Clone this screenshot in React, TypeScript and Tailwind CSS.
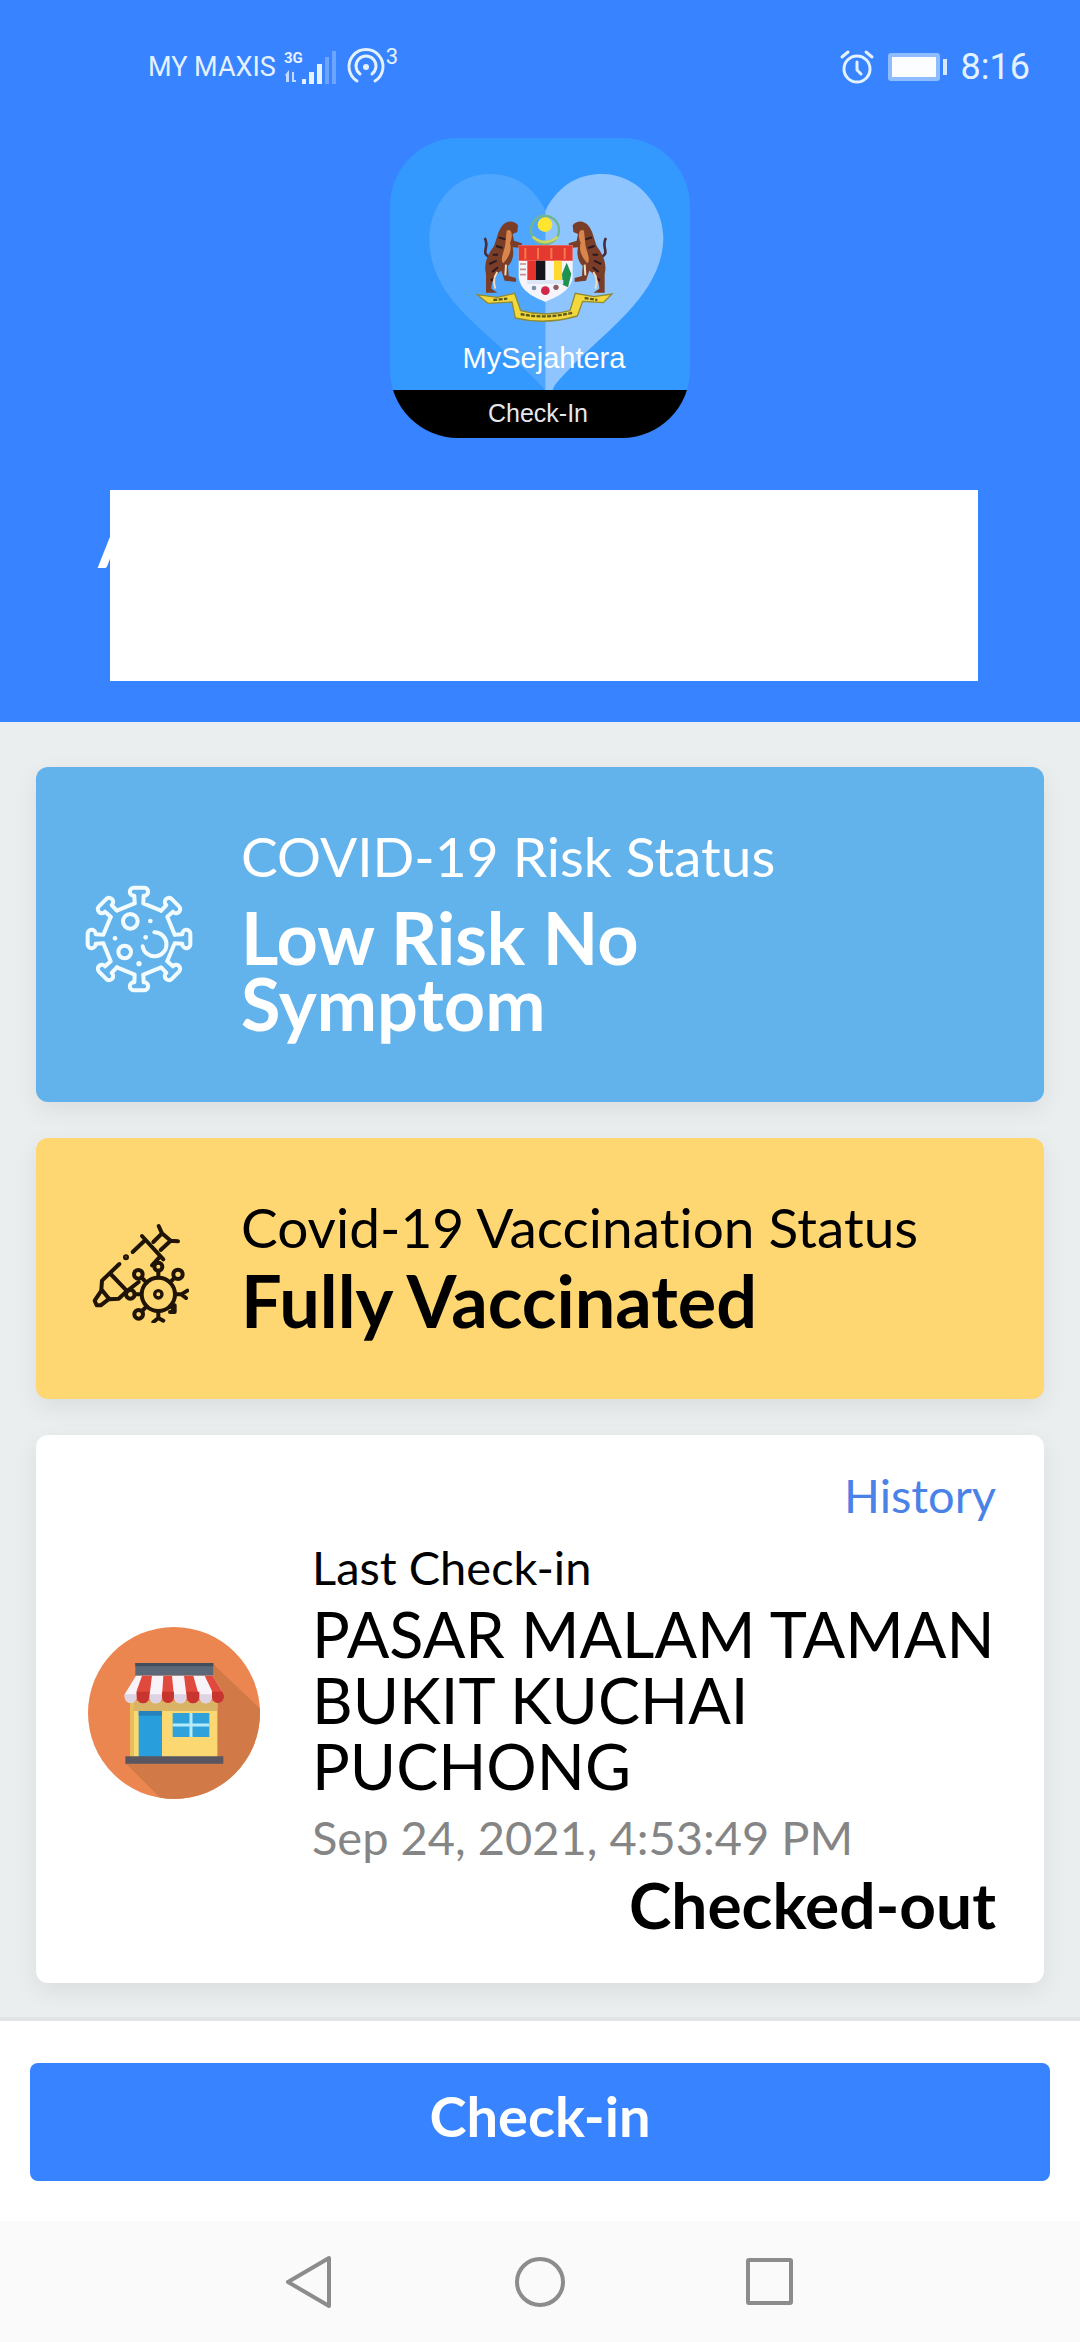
import type { ReactNode } from 'react'

interface StatusCardProps {
  icon: ReactNode
  label: string
  value: string
  className: string
  valueClassName: string
}

const SPIKE_ANGLES = [0, 45, 90, 135, 180, 225, 270, 315]

function SignalIcon() {
  return (
    <svg className="w-[54px] h-9" viewBox="0 0 54 36" fill="#e4f1ff" aria-hidden="true">
      <text x="0" y="14" fontFamily="Roboto, sans-serif" fontSize="15" fontWeight="700">3G</text>
      <path d="M1 26l4-5v12H2v-6zM8 33V23h2v8h2v2z" opacity=".8" />
      <rect x="18" y="30" width="4" height="5" />
      <rect x="25" y="23" width="5" height="12" />
      <rect x="33" y="15" width="5" height="20" />
      <rect x="41" y="8" width="4" height="27" opacity=".3" />
      <rect x="48" y="2" width="4" height="33" opacity=".3" />
    </svg>
  )
}

function HotspotIcon() {
  return (
    <svg className="w-10 h-10" viewBox="0 0 40 40" fill="none" stroke="#e4f1ff" strokeWidth="3" strokeLinecap="round" aria-hidden="true">
      <path d="M11 34a17 17 0 1 1 18 0" />
      <path d="M14 27a10 10 0 1 1 12 0" />
      <circle cx="20" cy="20" r="3" fill="#e4f1ff" stroke="none" />
    </svg>
  )
}

function AlarmIcon() {
  return (
    <svg className="w-9 h-9" viewBox="0 0 36 36" fill="none" stroke="#e4f1ff" strokeWidth="3" strokeLinecap="round" aria-hidden="true">
      <circle cx="18" cy="20" r="13" />
      <path d="M18 13v8l4 4M3 8l6-5M33 8l-6-5" />
    </svg>
  )
}

function BatteryIcon() {
  return (
    <svg className="w-[62px] h-[30px]" viewBox="0 0 62 30" aria-hidden="true">
      <rect x="1" y="1" width="52" height="28" rx="3" fill="#8fbcff" />
      <rect x="5" y="5" width="44" height="20" fill="#fbfdff" />
      <rect x="56" y="7" width="4" height="16" fill="#d8e9ff" />
    </svg>
  )
}

function StatusBar() {
  return (
    <div className="flex items-center justify-between h-[134px] pl-[148px] pr-[50px] text-[#e4f1ff] font-[Roboto,sans-serif]">
      <div className="flex items-center">
        <span className="text-[27px]">MY MAXIS</span>
        <span className="ml-2"><SignalIcon /></span>
        <span className="ml-2"><HotspotIcon /></span>
        <span className="text-[22px] leading-none pb-5">3</span>
      </div>
      <div className="flex items-center">
        <AlarmIcon />
        <span className="ml-3"><BatteryIcon /></span>
        <span className="ml-3 text-[36px]">8:16</span>
      </div>
    </div>
  )
}

function Tiger() {
  return (
    <g>
      <path d="M324 378C300 366 328 346 312 322" fill="none" stroke="#4a2c3c" strokeWidth="8" />
      <path d="M360 292C372 270 398 266 412 284L410 304L396 310L400 330L424 338L422 352L396 350C402 378 392 396 382 406L384 436L406 442V454L372 450L362 420C344 432 332 452 332 474L350 486H316V430C308 398 322 370 340 346C348 326 350 308 360 292Z" fill="#7a3d28" />
      <path d="M378 300C394 290 398 318 388 336C396 362 380 384 368 398C356 386 372 360 374 340Z" fill="#d9854c" />
      <path d="M334 424L352 410M326 400L348 390M336 372L352 372M346 346L366 352M354 320L374 326M330 450L344 440" stroke="#2c1820" strokeWidth="6" />
      <path d="M350 424C340 438 336 452 344 474M376 402L374 434" fill="none" stroke="#f3d9b6" strokeWidth="6" />
    </g>
  )
}

function AppLogo() {
  return (
    <div className="relative w-[300px] h-[300px] rounded-[68px] overflow-hidden bg-[#3399ff] text-white font-['Liberation_Sans',Arial,sans-serif]">
      <svg className="absolute inset-0 w-full h-full" viewBox="28 22 900 900" aria-hidden="true">
        <path d="M494 240C450 150 380 128 320 130C220 134 146 220 146 330C152 520 330 600 494 778Z" fill="#4fa6ff" />
        <path d="M494 240C540 150 610 128 670 130C770 134 846 220 848 320C848 480 690 590 580 700C545 738 520 760 516 778H494Z" fill="#8ec5ff" />
        <circle cx="493" cy="298" r="42" fill="none" stroke="#70b68e" strokeWidth="7" />
        <circle cx="493" cy="282" r="22" fill="#ffe52e" />
        <path d="M456 318Q493 350 532 318" fill="none" stroke="#cfd85c" strokeWidth="8" />
        <Tiger />
        <g transform="translate(988 0) scale(-1 1)"><Tiger /></g>
        <path d="M414 344H576V440C570 484 524 500 494 514C462 500 420 484 414 440Z" fill="#f4f4fa" />
        <path d="M414 344H576V390H414Z" fill="#e5392f" />
        <path d="M434 352v34M472 352v34M512 352v34M552 352v34" stroke="#f47a4c" strokeWidth="6" />
        <path d="M440 390h26v58h-26z" fill="#e6322c" />
        <path d="M466 390h28v58h-28z" fill="#15131c" />
        <path d="M520 390h24v58h-24z" fill="#ffd92e" />
        <path d="M544 430L558 396L572 430L562 470L546 462Z" fill="#1d9150" />
        <path d="M418 400h18M418 416h18M418 432h18" stroke="#c98b8b" strokeWidth="5" />
        <path d="M440 448H548V460H440Z" fill="#dce6f5" />
        <circle cx="494" cy="480" r="13" fill="#d22747" />
        <circle cx="460" cy="472" r="7" fill="#7d90a8" />
        <circle cx="526" cy="470" r="8" fill="#8a5b60" />
        <path d="M290 492L350 500L402 488L420 540Q494 560 568 540L584 488L640 498L694 490L668 516L606 512L590 556Q494 584 404 562L394 514L322 518Z" fill="#f3d83b" stroke="#8f8a34" strokeWidth="4" />
        <path d="M420 550Q494 566 576 546M338 508L380 504M612 502L650 508" fill="none" stroke="#5f5a20" strokeWidth="7" strokeDasharray="12 4" />
      </svg>
      <div className="relative flex flex-col h-full justify-end text-center">
        <div className="pl-2 pb-4 text-[29px] leading-8">MySejahtera</div>
        <div className="h-12 pr-1 leading-[46px] bg-black text-[25px] text-gray-200">Check-In</div>
      </div>
    </div>
  )
}

function VirusIcon() {
  return (
    <svg className="w-[110px] h-[110px]" viewBox="-165 -165 330 330" fill="none" stroke="#f2fcff" strokeWidth="12" strokeLinecap="round" strokeLinejoin="round" aria-hidden="true">
      {SPIKE_ANGLES.map((angle) => (
        <path key={angle} transform={`rotate(${angle})`} d="M-13-107L-14-130A12 12 0 0 1-17-154H17A12 12 0 0 1 14-130L13-107L66-85" />
      ))}
      <circle cx="-26" cy="-53" r="22" />
      <circle cx="-43" cy="39" r="19" />
      <path d="M46-20A36 36 0 1 1 11 22" />
      <g fill="#f2fcff" stroke="none">
        <circle cx="34" cy="-54" r="7" />
        <circle cx="-72" cy="-2" r="7" />
        <circle cx="20" cy="-5" r="7" />
        <circle cx="0" cy="74" r="8" />
      </g>
    </svg>
  )
}

function VaccineIcon() {
  return (
    <svg className="w-[100px] h-[100px]" viewBox="27 35 300 300" fill="none" stroke="#1f1405" strokeWidth="12" strokeLinecap="round" strokeLinejoin="round" aria-hidden="true">
      <path d="M236 44L246 66L272 88L294 90M246 66L220 92M272 88L242 116" />
      <path d="M186 74L250 144M196 86L158 122M240 136L216 162" />
      <path d="M118 158L66 208L64 234L88 264L116 262L140 240L176 212M92 188L142 240" />
      <path d="M64 238L44 268L50 282L62 282L88 262" />
      <circle cx="138" cy="138" r="3" fill="#1f1405" />
      <circle cx="235" cy="249" r="50" />
      <circle cx="235" cy="249" r="11" strokeWidth="10" />
      <path d="M235 198V178M270 213L282 201M200 214L186 200M184 249H164M200 285L186 299M286 249H304L322 238M304 249L318 260M271 284L284 297M284 282V302H270M235 300V320L220 332M235 320L250 328" />
      <circle cx="235" cy="166" r="12" />
      <circle cx="294" cy="189" r="14" />
      <circle cx="175" cy="189" r="13" />
      <circle cx="151" cy="249" r="13" />
      <circle cx="176" cy="309" r="13" />
    </svg>
  )
}

function ShopIcon() {
  return (
    <svg className="w-[172px] h-[172px] shrink-0" viewBox="54 78 516 516" aria-hidden="true">
      <defs>
        <clipPath id="shop-disc"><circle cx="312" cy="336" r="258" /></clipPath>
      </defs>
      <circle cx="312" cy="336" r="258" fill="#eb8650" />
      <path d="M430 190L620 370V620H300L166 486L444 464Z" fill="#d17a48" clipPath="url(#shop-disc)" />
      <path d="M180 300H442V470H180Z" fill="#fbd872" />
      <path d="M180 300H442V330H180Z" fill="#d9b467" />
      <path d="M180 300H192V470H180Z" fill="#e9bd5b" />
      <path d="M206 330H276V468H206Z" fill="#289fdc" />
      <path d="M206 330H276V344H206Z" fill="#2582ba" />
      <path d="M308 336H418V408H308Z" fill="#2fa2dc" />
      <path d="M363 336V408M308 372H418" stroke="#b5eaf8" strokeWidth="9" />
      <path d="M196 186H430V224H196Z" fill="#5c6878" />
      <path d="M196 186H430V196H196Z" fill="#434d5c" />
      <path d="M198 224H428L462 280V288A18 18 0 0 1 426 288A18 18 0 0 1 388 288A18 18 0 0 1 350 288A18 18 0 0 1 312 288A18 18 0 0 1 276 288A18 18 0 0 1 238 288A18 18 0 0 1 200 288A18 18 0 0 1 164 288V280Z" fill="#f7f3f8" />
      <path d="M216 224H246L238 288A18 18 0 0 1 200 288V270Z" fill="#e04a3e" />
      <path d="M280 224H306L312 288A18 18 0 0 1 276 288Z" fill="#e04a3e" />
      <path d="M342 224H370L388 288A18 18 0 0 1 350 288Z" fill="#e04a3e" />
      <path d="M404 224H428L462 280V288A18 18 0 0 1 426 288V270Z" fill="#e04a3e" />
      <path d="M164 280H200V288A18 18 0 0 1 164 288ZM238 280H276V288A18 18 0 0 1 238 288ZM312 280H350V288A18 18 0 0 1 312 288ZM388 280H426V288A18 18 0 0 1 388 288Z" fill="#ddd3e2" />
      <path d="M200 272H238V288A18 18 0 0 1 200 288ZM276 272H312V288A18 18 0 0 1 276 288ZM350 272H388V288A18 18 0 0 1 350 288ZM426 272H458L462 288A18 18 0 0 1 426 288Z" fill="#c8352f" />
      <path d="M166 466H460V488H166Z" fill="#5a5660" />
    </svg>
  )
}

function StatusCard({ icon, label, value, className, valueClassName }: StatusCardProps) {
  return (
    <section className={`flex items-center rounded-xl shadow-[0_8px_24px_rgba(0,0,0,0.07)] ${className}`}>
      <div className="flex justify-center w-[205px] shrink-0 pt-2">{icon}</div>
      <div className="flex-1 min-w-0 pt-[57px] pb-[66px] pr-12">
        <h2 className="text-[55px] leading-[64px]">{label}</h2>
        <p className={`max-w-[540px] text-[72px] leading-[66px] font-bold ${valueClassName}`}>{value}</p>
      </div>
    </section>
  )
}

function LastCheckIn() {
  return (
    <section className="rounded-xl shadow-[0_8px_24px_rgba(0,0,0,0.07)] bg-white pt-[30px] pb-12 pr-12 pl-[52px]">
      <div className="flex justify-end">
        <a href="#history" className="text-[47px] leading-[60px] text-[#4a82e8]">History</a>
      </div>
      <div className="flex items-center mt-2">
        <div className="shrink-0 pb-[42px]">
          <ShopIcon />
        </div>
        <div className="flex-1 min-w-0 pl-[52px]">
          <h2 className="text-[47px] leading-[68px]">Last Check-in</h2>
          <p className="text-[63px] leading-[66px]">PASAR MALAM TAMAN BUKIT KUCHAI PUCHONG</p>
          <p className="text-[47px] leading-[76px] text-[#858585]">Sep 24, 2021, 4:53:49 PM</p>
          <p className="text-[64px] leading-[60px] font-bold text-right">Checked-out</p>
        </div>
      </div>
    </section>
  )
}

function NavBar() {
  return (
    <nav className="flex items-center justify-center gap-[174px] h-[122px] bg-[#fafafa] text-[#8c8c8c]">
      <button aria-label="Back">
        <svg className="w-14 h-14" viewBox="0 0 56 56" fill="none" stroke="currentColor" strokeWidth="4" strokeLinejoin="round">
          <path d="M47 4V52L6 28Z" />
        </svg>
      </button>
      <button aria-label="Home">
        <svg className="w-14 h-14" viewBox="0 0 56 56" fill="none" stroke="currentColor" strokeWidth="4">
          <circle cx="28" cy="28" r="23" />
        </svg>
      </button>
      <button aria-label="Recent apps">
        <svg className="w-14 h-14" viewBox="0 0 56 56" fill="none" stroke="currentColor" strokeWidth="4" strokeLinejoin="round">
          <rect x="6" y="6" width="43" height="43" rx="1" />
        </svg>
      </button>
    </nav>
  )
}

export default function App() {
  return (
    <div className="flex flex-col min-h-screen bg-[#ebeeef] text-black font-[Lato,sans-serif] [font-variant-ligatures:none]">
      <header className="bg-[#3883ff] pb-[41px]">
        <StatusBar />
        <div className="flex justify-center pt-1">
          <AppLogo />
        </div>
        <div className="relative mt-[52px] pl-[110px] pr-[102px]">
          <span className="absolute left-[98px] top-[14px] text-[64px] leading-[80px] font-bold text-white">A</span>
          <div className="relative h-[191px] bg-white" />
        </div>
      </header>

      <main className="flex flex-col gap-9 px-9 pt-[45px] pb-[34px]">
        <StatusCard
          icon={<VirusIcon />}
          label="COVID-19 Risk Status"
          value="Low Risk No Symptom"
          className="bg-[#62b2ec] text-white"
          valueClassName="mt-4"
        />
        <StatusCard
          icon={<VaccineIcon />}
          label="Covid-19 Vaccination Status"
          value="Fully Vaccinated"
          className="bg-[#fed773]"
          valueClassName="mt-2"
        />
        <LastCheckIn />
      </main>

      <footer className="relative mt-auto">
        <div className="bg-white border-t-4 border-[#e2e4e5] px-[30px] pt-[42px] pb-10">
          <button className="w-full h-[118px] pb-3 rounded-lg bg-[#3883ff] text-[56px] leading-none font-bold text-white">Check-in</button>
        </div>
        <NavBar />
      </footer>
    </div>
  )
}
